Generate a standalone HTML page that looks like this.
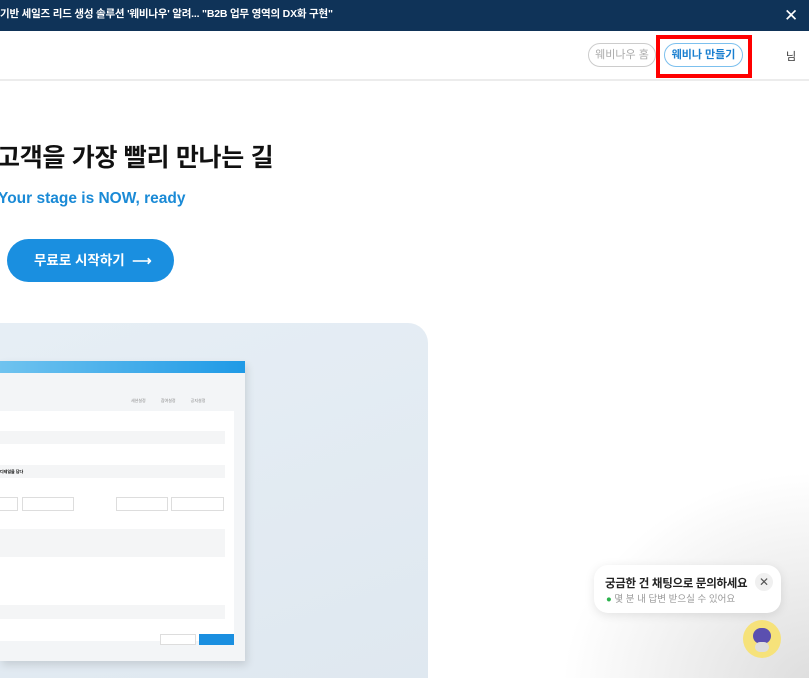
<!DOCTYPE html>
<html><head><meta charset="utf-8"><style>
*{margin:0;padding:0;box-sizing:border-box}
html,body{width:809px;height:678px;overflow:hidden}
body{background:#fff;font-family:"Liberation Sans","Noto Sans CJK KR",sans-serif;position:relative}
.top{position:absolute;left:0;top:0;width:809px;height:31px;background:#0f3358;color:#fff;font-size:10.5px;font-weight:bold;line-height:29px;letter-spacing:-0.2px}
.x{position:absolute;right:11px;top:0;font-size:17px;font-weight:normal;line-height:31px}
.nav{position:absolute;top:31px;left:0;width:809px;height:50px;border-bottom:2px solid #ececec;background:#fff}
.b{position:absolute;top:12px;height:24px;border-radius:12px;font-size:11px;line-height:22px;text-align:center}
.red{position:absolute;left:656px;top:35px;width:96px;height:43px;border:4px solid #f00}
h1{position:absolute;left:-3px;top:138px;font-size:25px;font-weight:bold;color:#111;letter-spacing:-0.3px}
.sub{position:absolute;left:-2px;top:190px;font-size:15.5px;font-weight:bold;color:#1a8ad6}
.cta{position:absolute;left:7px;top:239px;width:167px;height:43px;border-radius:22px;background:#1a8fe0;color:#fff;font-size:13.5px;font-weight:bold;line-height:43px;padding-left:27px}
.panel{position:absolute;left:0;top:323px;width:428px;height:360px;border-radius:0 20px 0 0;background:linear-gradient(160deg,#e6eef5,#dfe8f0)}
.win{position:absolute;left:0;top:361px;width:245px;height:300px;background:#f3f5f7;box-shadow:2px 4px 8px rgba(0,0,0,.12)}
.wbar{height:12px;background:linear-gradient(90deg,#6fc3ef,#1f9ae6)}
.card{position:absolute;left:0;top:50px;width:234px;height:230px;background:#fff}
.f{position:absolute;background:#f4f5f6}
.chat{position:absolute;left:594px;top:565px;width:187px;height:48px;background:#fff;border-radius:14px;box-shadow:0 2px 10px rgba(0,0,0,.1)}
.glow{position:absolute;left:560px;top:470px;width:260px;height:220px;background:radial-gradient(ellipse at 100% 100%,#dcdcdc,rgba(255,255,255,0) 70%)}
</style></head><body>
<div class="top">기반 세일즈 리드 생성 솔루션 '웨비나우' 알려... "B2B 업무 영역의 DX화 구현"<span class="x">✕</span></div>
<div class="nav">
<div class="b" style="left:588px;width:68px;border:1px solid #ccc;color:#aaa">웨비나우 홈</div>
<div class="b" style="left:664px;width:79px;border:1.5px solid #7cc0ee;color:#1a7fd0;font-weight:bold">웨비나 만들기</div>
<div style="position:absolute;left:786px;top:17px;font-size:11px;color:#333">님</div>
</div>
<div class="red"></div>
<h1>고객을 가장 빨리 만나는 길</h1>
<div class="sub">Your stage is NOW, ready</div>
<div class="cta">무료로 시작하기 &nbsp;⟶</div>
<div class="glow"></div>
<div class="panel"></div>
<div class="win"><div class="wbar"></div>
<div style="position:absolute;top:37px;left:131px;font-size:4px;color:#888;word-spacing:14px">세션설정 참여설정 공지설정</div>
<div class="card">
<div class="f" style="left:0;top:20px;width:225px;height:13px"></div>
<div class="f" style="left:0;top:54px;width:225px;height:13px"></div>
<div style="position:absolute;left:0;top:58px;font-size:4px;font-weight:bold">디테일을 담다</div>
<div style="position:absolute;left:-4px;top:86px;width:22px;height:14px;border:1px solid #ddd"></div>
<div style="position:absolute;left:22px;top:86px;width:52px;height:14px;border:1px solid #ddd"></div>
<div style="position:absolute;left:116px;top:86px;width:52px;height:14px;border:1px solid #ddd"></div>
<div style="position:absolute;left:171px;top:86px;width:53px;height:14px;border:1px solid #ddd"></div>
<div class="f" style="left:0;top:118px;width:225px;height:28px"></div>
<div class="f" style="left:0;top:194px;width:225px;height:14px"></div>
</div>
<div style="position:absolute;left:160px;top:273px;width:36px;height:11px;background:#fff;border:1px solid #ddd"></div>
<div style="position:absolute;left:199px;top:273px;width:35px;height:11px;background:#1a8fe0"></div>
</div>
<div class="chat">
<div style="position:absolute;left:11px;top:10px;font-size:11.5px;font-weight:bold;color:#222;letter-spacing:-0.3px">궁금한 건 채팅으로 문의하세요</div>
<div style="position:absolute;left:12px;top:26px;font-size:9.5px;color:#999"><span style="color:#2bb24c">●</span> 몇 분 내 답변 받으실 수 있어요</div>
<div style="position:absolute;left:161px;top:8px;width:18px;height:18px;border-radius:9px;background:#f0f0f0;text-align:center;line-height:18px;font-size:12px;color:#555">✕</div>
</div>
<div style="position:absolute;left:743px;top:620px;width:38px;height:38px;border-radius:19px;background:#f6e27a"><div style="position:absolute;left:10px;top:8px;width:18px;height:16px;border-radius:8px;background:#5b4fb0"></div><div style="position:absolute;left:12px;top:22px;width:14px;height:10px;border-radius:5px;background:#ddd"></div></div>
</body></html>
